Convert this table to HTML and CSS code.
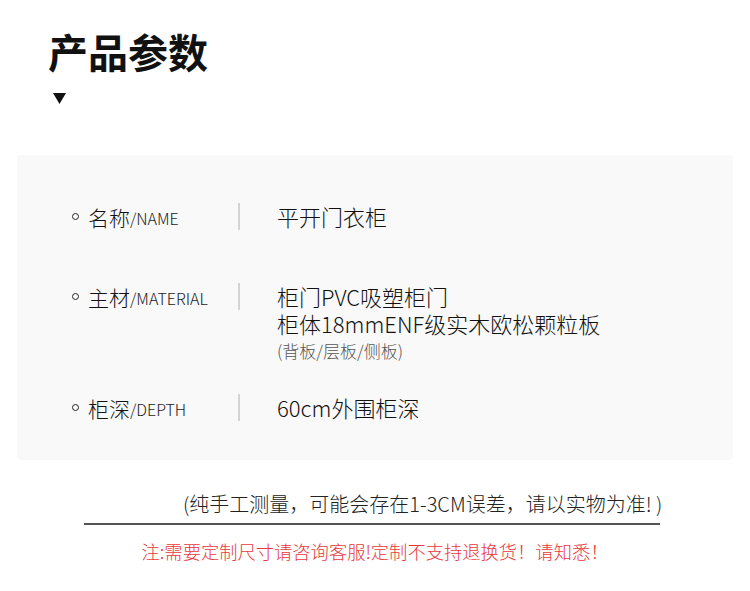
FILE: index.html
```html
<!doctype html>
<html lang="zh">
<head>
  <meta charset="UTF-8">
  <meta name="viewport" content="width=device-width, initial-scale=1.0">
  <title>产品参数</title>
  <link rel="stylesheet" href="styles.css">
</head>
<body>
  <header class="head">
    <h1 class="title">产品参数</h1>
    <svg class="arrow" width="13" height="11" viewBox="0 0 13 11"><polygon points="0,0 13,0 6.5,11" fill="#111"/></svg>
  </header>

  <section class="panel">
    <div class="row">
      <div class="label"><span class="dot"></span>名称<small>/NAME</small></div>
      <div class="sep"></div>
      <div class="value"><p>平开门衣柜</p></div>
    </div>
    <div class="row">
      <div class="label"><span class="dot"></span>主材<small>/MATERIAL</small></div>
      <div class="sep"></div>
      <div class="value">
        <p>柜门PVC吸塑柜门</p>
        <p>柜体18mmENF级实木欧松颗粒板</p>
        <p class="sub">(背板/层板/侧板)</p>
      </div>
    </div>
    <div class="row">
      <div class="label"><span class="dot"></span>柜深<small>/DEPTH</small></div>
      <div class="sep"></div>
      <div class="value"><p>60cm外围柜深</p></div>
    </div>
  </section>

  <div class="note">
    <p>(纯手工测量，可能会存在1-3CM误差，请以实物为准! )</p>
  </div>

  <p class="warn">注:需要定制尺寸请咨询客服!定制不支持退换货！请知悉！</p>
</body>
</html>
```

FILE: styles.css
```css
* {
    margin: 0;
    padding: 0;
    box-sizing: border-box;
}

body {
    width: 750px;
    background-color: #fff;
    color: #111;
    font-family: "Noto Sans CJK SC", "Noto Sans", sans-serif;
}

.head {
    padding: 31px 0 0 48px;
    height: 155px;
}

.title {
    font-size: 40px;
    line-height: 40px;
    font-weight: 700;
    color: #111;
}

.arrow {
    display: block;
    margin: 22px 0 0 5px;
}

.panel {
    margin: 0 17px;
    height: 305px;
    padding-top: 48px;
    background-color: #f9f9f9;
    border-radius: 4px;
}

.row {
    display: flex;
    min-height: 50px;
    margin-bottom: 30px;
}

.label {
    width: 221px;
    padding-left: 55px;
    display: flex;
    align-items: center;
    height: 27px;
    font-size: 21px;
    font-weight: 300;
    color: #111;
}

.label small {
    font-size: 16px;
    color: #222;
    padding-top: 3px;
}

.dot {
    flex-shrink: 0;
    width: 7px;
    height: 7px;
    border: 1.5px solid #222;
    border-radius: 50%;
    margin-right: 9px;
}

.sep {
    width: 2px;
    height: 27px;
    background-color: #d4d4d4;
    margin-right: 37px;
}

.value p {
    font-size: 22px;
    line-height: 27px;
    font-weight: 300;
    color: #111;
}

.value .sub {
    font-size: 17px;
    color: #555;
}

.note {
    width: 576px;
    margin: 30px 0 0 84px;
    border-bottom: 2px solid #555;
    padding: 0 0 5px 99px;
}

.note p {
    font-size: 20px;
    line-height: 28px;
    font-weight: 300;
    color: #222;
    white-space: nowrap;
}

.warn {
    margin-top: 12px;
    text-align: center;
    font-size: 18.3px;
    line-height: 28px;
    font-weight: 300;
    color: #e8383d;
}
```
